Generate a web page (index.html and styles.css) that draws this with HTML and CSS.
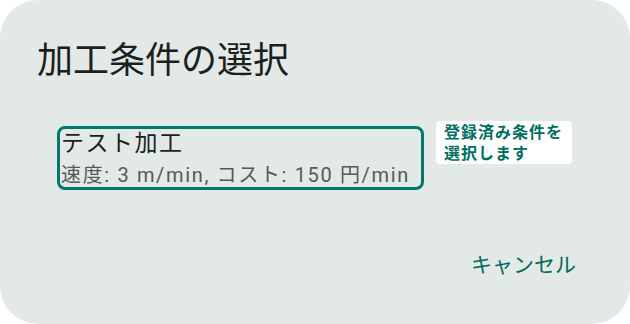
FILE: index.html
```html
<!DOCTYPE html>
<html lang="ja">
<head>
    <meta charset="UTF-8">
    <meta name="viewport" content="width=device-width, initial-scale=1.0">
    <title>加工条件の選択</title>
    <link rel="stylesheet" href="styles.css">
</head>
<body>
    <div class="dialog">
        <h1 class="dialog-title">加工条件の選択</h1>

        <div class="condition-row">
            <div class="condition">
                <div class="condition-name">テスト加工</div>
                <div class="condition-detail">速度: 3 m/min, コスト: 150 円/min</div>
            </div>
            <div class="tooltip">登録済み条件を<br>選択します</div>
        </div>

        <div class="actions">
            <button class="text-button">キャンセル</button>
        </div>
    </div>
</body>
</html>
```

FILE: styles.css
```css
body {
    margin: 0;
    background-color: #ffffff;
    font-family: Roboto, "Noto Sans CJK JP", sans-serif;
}

.dialog {
    box-sizing: border-box;
    width: 630px;
    height: 324px;
    padding: 36px 54px 0 37px;
    background-color: #e3e9e7;
    border-radius: 38px;
    display: flex;
    flex-direction: column;
}

.dialog-title {
    margin: 0;
    font-size: 36px;
    font-weight: 400;
    line-height: 50px;
    color: #1b1f1e;
}

.condition-row {
    display: flex;
    align-items: flex-start;
    gap: 12px;
    margin-top: 40px;
    margin-left: 20px;
}

.condition {
    width: 367px;
    height: 64px;
    box-sizing: border-box;
    border: 3px solid #00796b;
    border-radius: 8px;
    padding: 0 0 0 1px;
    white-space: nowrap;
}

.condition-name {
    font-size: 23px;
    line-height: 30px;
    letter-spacing: 1.5px;
    color: #1b1f1e;
}

.condition-detail {
    margin-top: 3px;
    font-size: 20px;
    line-height: 26px;
    letter-spacing: 1.65px;
    color: #545a58;
}

.tooltip {
    margin-top: -5px;
    padding: 1px 9px 0 8px;
    background-color: #ffffff;
    border-radius: 4px;
    font-size: 16px;
    font-weight: 700;
    line-height: 21px;
    letter-spacing: 1px;
    color: #00705f;
}

.actions {
    display: flex;
    justify-content: flex-end;
    margin-top: auto;
    margin-bottom: 45px;
}

.text-button {
    border: none;
    background: none;
    padding: 0;
    font-family: inherit;
    font-size: 21px;
    line-height: 28px;
    color: #006b5c;
    cursor: pointer;
}
```
